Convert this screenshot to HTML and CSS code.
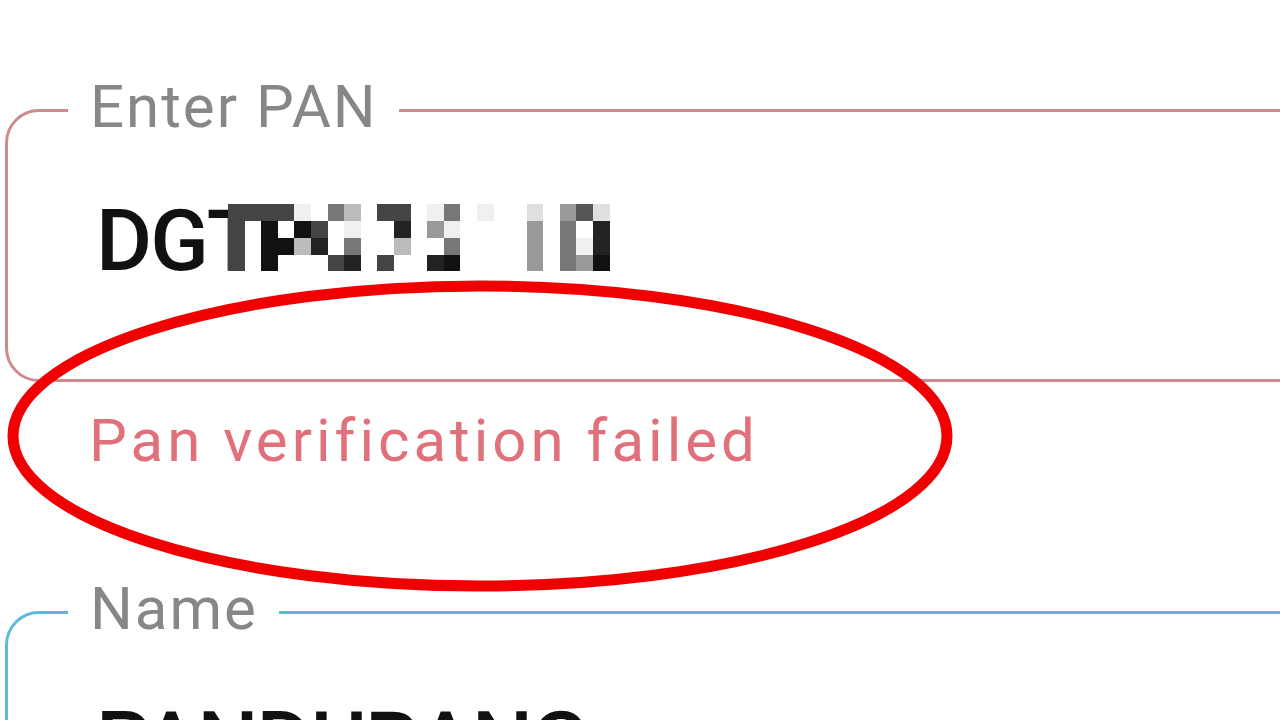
FILE: index.html
```html
<!DOCTYPE html>
<html lang="en">
<head>
  <meta charset="UTF-8">
  <meta name="viewport" content="width=device-width, initial-scale=1.0">
  <title>PAN details</title>
  <link rel="stylesheet" href="styles.css">
</head>
<body>
  <div class="form">
    <fieldset class="field field-error">
      <legend>Enter PAN</legend>
      <div class="value">DGT<span class="mosaic" id="panMask"></span></div>
    </fieldset>
    <p class="error-text">Pan verification failed</p>

    <fieldset class="field field-focus">
      <legend>Name</legend>
      <div class="value">PANDURANG</div>
    </fieldset>
  </div>

  <svg class="ring" width="1280" height="720" viewBox="0 0 1280 720">
    <ellipse cx="480" cy="436" rx="467" ry="150" fill="none" stroke="#f00000" stroke-width="11"/>
  </svg>

  <script>
    // hidden part of the PAN, drawn as grey blocks (0 = white ... 9 = almost black)
    const rows = [
      "77771053077015010020462",
      "70909701008041000040508",
      "70993805003005000040518",
      "70900078070089000040549"
    ];
    const shades = ["#fff", "#f0f0f0", "#e0e0e0", "#bbb", "#999", "#777", "#555", "#444", "#222", "#111"];
    const mask = document.getElementById("panMask");
    rows.forEach(row => {
      for (const ch of row) {
        const cell = document.createElement("i");
        cell.style.background = shades[Number(ch)];
        mask.appendChild(cell);
      }
    });
  </script>
</body>
</html>
```

FILE: styles.css
```css
* {
  box-sizing: border-box;
}
html, body {
  margin: 0;
  height: 100%;
  overflow: hidden;
  background: #fff;
}
body {
  font-family: Roboto, 'Noto Sans', sans-serif;
  position: relative;
}
.form {
  padding: 77px 0 0 5px;
}

/* outlined text field with the label sitting in the border */
.field {
  margin: 0;
  width: calc(100% + 60px);
  padding: 54px 0 95px 60px;
  border: 3px solid #cf8a8d;
  border-radius: 34px;
}
.field legend {
  padding: 0 21px 7px 22px;
  font-size: 60px;
  line-height: 60px;
  letter-spacing: 2px;
  color: #878787;
}
.field-focus {
  margin-top: 108px;
  border-color: #5cbbd9;
}
.value {
  position: relative;
  padding-left: 28px;
  font-size: 86px;
  font-weight: 500;
  line-height: 86px;
  letter-spacing: -2px;
  color: #111;
  white-space: nowrap;
}
/* pixelated cover over the rest of the number */
.mosaic {
  position: absolute;
  top: 6px;
  left: 160px;
  display: grid;
  grid-template-columns: repeat(23, 16.6px);
  grid-auto-rows: 16.85px;
}
.error-text {
  margin: 29px 0 0 84px;
  font-size: 60px;
  line-height: 60px;
  letter-spacing: 4px;
  color: #e0707a;
}
.ring {
  position: absolute;
  top: 0;
  left: 0;
  pointer-events: none;
}
```
